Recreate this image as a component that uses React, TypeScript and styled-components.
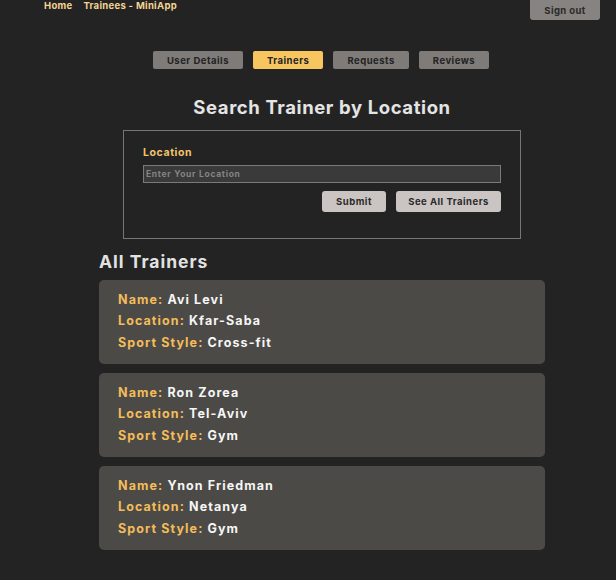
import React from "react";
import styled, { createGlobalStyle } from "styled-components";

const Global = createGlobalStyle`
  html, body {
    margin: 0;
    padding: 0;
    background: #232323;
    font-family: Inter, "Liberation Sans", Arial, sans-serif;
  }
  * { box-sizing: border-box; }
`;

const Page = styled.div`
  width: 616px;
  min-height: 580px;
  background: #232323;
  display: flex;
  flex-direction: column;
`;

const TopBar = styled.header`
  height: 20px;
  display: flex;
  align-items: flex-start;
  justify-content: space-between;
  padding: 0 16px 0 44px;
`;

const NavLinks = styled.nav`
  display: flex;
  gap: 11px;
`;

const NavLink = styled.a`
  font-size: 9.5px;
  font-weight: 700;
  letter-spacing: 0.3px;
  color: #f3d592;
  text-decoration: none;
  line-height: 11px;
`;

const SignOut = styled.button`
  width: 70px;
  height: 20px;
  border: none;
  border-radius: 0 0 3px 3px;
  background: #878381;
  color: #2a2a2a;
  font-family: inherit;
  font-size: 9.5px;
  font-weight: 700;
  letter-spacing: 0.4px;
  padding: 0;
`;

const Tabs = styled.div`
  display: flex;
  justify-content: center;
  gap: 10px;
  margin-top: 31px;
  padding-left: 26px;
`;

const Tab = styled.button<{ $active?: boolean }>`
  height: 18px;
  padding: 0 14px;
  border: none;
  border-radius: 2px;
  background: ${(p) => (p.$active ? "#f8c661" : "#7e7b79")};
  color: #232323;
  font-family: inherit;
  font-size: 9.5px;
  font-weight: 700;
  letter-spacing: 0.5px;
`;

const Title = styled.h1`
  margin: 27px 0 0;
  text-align: center;
  font-size: 18.5px;
  font-weight: 700;
  letter-spacing: 0.6px;
  color: #e4e4e4;
  line-height: 22px;
  padding-left: 28px;
`;

const SearchBox = styled.form`
  margin: 12px 0 0 123px;
  width: 398px;
  height: 109px;
  border: 1px solid #767676;
  padding: 16px 19px 0 19px;
  display: flex;
  flex-direction: column;
`;

const Label = styled.label`
  font-size: 10.5px;
  font-weight: 700;
  letter-spacing: 0.6px;
  color: #f3c46c;
  line-height: 12px;
`;

const Input = styled.input`
  margin-top: 6px;
  height: 18px;
  width: 100%;
  background: #3a3a3a;
  border: 1px solid #7a7a7a;
  color: #ddd;
  font-family: inherit;
  font-size: 8.5px;
  font-weight: 700;
  letter-spacing: 0.7px;
  padding: 0 2px;
  outline: none;
  &::placeholder { color: #858585; }
`;

const Actions = styled.div`
  display: flex;
  justify-content: flex-end;
  gap: 10px;
  margin-top: 8px;
`;

const Btn = styled.button<{ $w: number }>`
  width: ${(p) => p.$w}px;
  height: 21px;
  border: none;
  border-radius: 3px;
  background: #cac5c2;
  color: #2a2a2a;
  font-family: inherit;
  font-size: 9.5px;
  font-weight: 700;
  letter-spacing: 0.5px;
  padding: 0;
`;

const Section = styled.section`
  margin: 13px 0 0 99px;
  width: 446px;
`;

const SectionTitle = styled.h2`
  margin: 0;
  font-size: 17.5px;
  font-weight: 700;
  letter-spacing: 1px;
  color: #e2e2e2;
  line-height: 20px;
`;

const Cards = styled.div`
  display: flex;
  flex-direction: column;
  gap: 9px;
  margin-top: 8px;
`;

const Card = styled.div`
  height: 84px;
  background: #4c4a46;
  border-radius: 5px;
  padding: 0 19px 2px;
  display: flex;
  flex-direction: column;
  justify-content: center;
`;

const Line = styled.div`
  font-size: 12.5px;
  font-weight: 700;
  letter-spacing: 1.1px;
  line-height: 21.5px;
  color: #f6f6f6;
`;

const Key = styled.span`
  color: #f4bd5a;
`;

const trainers = [
  { name: "Avi Levi", location: "Kfar-Saba", style: "Cross-fit" },
  { name: "Ron Zorea", location: "Tel-Aviv", style: "Gym" },
  { name: "Ynon Friedman", location: "Netanya", style: "Gym" },
];

export default function App() {
  return (
    <Page>
      <Global />
      <TopBar>
        <NavLinks>
          <NavLink href="#">Home</NavLink>
          <NavLink href="#">Trainees - MiniApp</NavLink>
        </NavLinks>
        <SignOut>Sign out</SignOut>
      </TopBar>
      <Tabs>
        <Tab>User Details</Tab>
        <Tab $active>Trainers</Tab>
        <Tab>Requests</Tab>
        <Tab>Reviews</Tab>
      </Tabs>
      <Title>Search Trainer by Location</Title>
      <SearchBox onSubmit={(e) => e.preventDefault()}>
        <Label>Location</Label>
        <Input placeholder="Enter Your Location" />
        <Actions>
          <Btn type="submit" $w={64}>Submit</Btn>
          <Btn type="button" $w={105}>See All Trainers</Btn>
        </Actions>
      </SearchBox>
      <Section>
        <SectionTitle>All Trainers</SectionTitle>
        <Cards>
          {trainers.map((t) => (
            <Card key={t.name}>
              <Line><Key>Name:</Key> {t.name}</Line>
              <Line><Key>Location:</Key> {t.location}</Line>
              <Line><Key>Sport Style:</Key> {t.style}</Line>
            </Card>
          ))}
        </Cards>
      </Section>
    </Page>
  );
}
